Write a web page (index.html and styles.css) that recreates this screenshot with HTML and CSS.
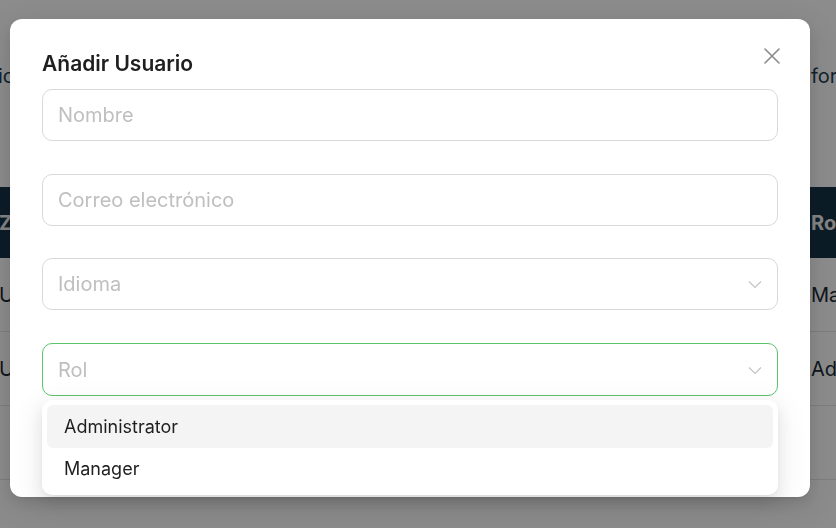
FILE: index.html
```html
<!DOCTYPE html>
<html lang="es">
<head>
<meta charset="utf-8">
<title>Añadir Usuario</title>
<link rel="stylesheet" href="styles.css">
</head>
<body>
<div class="page">
  <p class="intro"><span class="intro-left">icionar</span><span class="intro-right">formulario</span></p>
  <div class="table">
    <div class="row head"><span class="cell-left">Zona</span><span class="cell-right">Rol</span></div>
    <div class="row"><span class="cell-left">Usuario</span><span class="cell-right">Manager</span></div>
    <div class="row"><span class="cell-left">Usuario</span><span class="cell-right">Administrator</span></div>
    <div class="row"><span class="cell-left"></span><span class="cell-right"></span></div>
  </div>
</div>
<div class="mask"></div>
<div class="modal">
  <button class="close" aria-label="Cerrar">
    <svg width="16" height="16" viewBox="0 0 16 16"><path d="M1 1 L15 15 M15 1 L1 15" stroke="#8a8a8a" stroke-width="1.6" fill="none" stroke-linecap="round"/></svg>
  </button>
  <h2 class="title">Añadir Usuario</h2>
  <div class="form">
    <div class="field"><span class="ph">Nombre</span></div>
    <div class="field"><span class="ph">Correo electrónico</span></div>
    <div class="field select"><span class="ph">Idioma</span>
      <svg class="chev" width="14" height="14" viewBox="0 0 14 14"><path d="M1 4.5 L7 10.5 L13 4.5" stroke="#c4c4c4" stroke-width="1.2" fill="none"/></svg>
    </div>
    <div class="field select focused"><span class="ph">Rol</span>
      <svg class="chev" width="14" height="14" viewBox="0 0 14 14"><path d="M1 4.5 L7 10.5 L13 4.5" stroke="#c4c4c4" stroke-width="1.2" fill="none"/></svg>
      <div class="dropdown">
        <div class="option active">Administrator</div>
        <div class="option">Manager</div>
      </div>
    </div>
  </div>
</div>
</body>
</html>
```
FILE: styles.css
```css
* { box-sizing: border-box; }
html, body {
  margin: 0;
  width: 836px;
  height: 528px;
  overflow: hidden;
  font-family: Inter, "Noto Sans", sans-serif;
}
.page {
  background: #fff;
  height: 528px;
  padding-top: 60px;
  color: #233f55;
  font-size: 20px;
}
.intro {
  margin: 0;
  display: grid;
  grid-template-columns: 811px 1fr;
  white-space: nowrap;
  overflow: hidden;
  line-height: 32px;
}
.intro-left { margin-left: -2px; }
.table {
  margin-top: 95px;
}
.row {
  display: grid;
  grid-template-columns: 811px 1fr;
  height: 74px;
  align-items: center;
  white-space: nowrap;
  overflow: hidden;
  border-bottom: 1px solid #e6e6e6;
  color: #1c2a35;
}
.row.head {
  height: 71px;
  background: #163347;
  color: #f0f0f0;
  font-weight: 700;
  border-bottom: none;
}
.cell-left { margin-left: -1px; }
.mask {
  position: fixed;
  inset: 0;
  background: rgba(0, 0, 0, 0.45);
}
.modal {
  position: absolute;
  left: 10px;
  top: 19px;
  width: 800px;
  background: #fff;
  border-radius: 12px;
  padding: 31px 32px 101px;
  box-shadow: 0 6px 16px 0 rgba(0,0,0,0.1), 0 3px 6px -4px rgba(0,0,0,0.14), 0 9px 28px 8px rgba(0,0,0,0.06);
}
.close {
  position: absolute;
  top: 26px;
  right: 27px;
  width: 22px;
  height: 22px;
  padding: 0;
  border: none;
  background: transparent;
  display: flex;
  align-items: center;
  justify-content: center;
}
.title {
  margin: 0 0 11px;
  font-size: 21px;
  line-height: 28px;
  font-weight: 600;
  color: #1f1f1f;
}
.form {
  display: flex;
  flex-direction: column;
  gap: 32.7px;
}
.field {
  position: relative;
  height: 52px;
  border: 1px solid #d9d9d9;
  border-radius: 10px;
  padding: 0 15px;
  display: flex;
  align-items: center;
  justify-content: space-between;
  font-size: 20px;
}
.ph { color: #bfbfbf; }
.field.focused { border-color: #5cc46c; height: 53px; }
.chev { flex: none; }
.dropdown {
  position: absolute;
  top: calc(100% + 5px);
  left: -1px;
  right: -1px;
  background: #fff;
  border-radius: 10px;
  padding: 5px;
  box-shadow: 0 6px 16px 0 rgba(0,0,0,0.08), 0 3px 6px -4px rgba(0,0,0,0.12), 0 9px 28px 8px rgba(0,0,0,0.05);
  z-index: 2;
}
.option {
  height: 42.5px;
  display: flex;
  align-items: center;
  padding: 0 17px;
  border-radius: 6px;
  font-size: 18px;
  color: #1f1f1f;
}
.option.active { background: #f4f4f4; }
```
